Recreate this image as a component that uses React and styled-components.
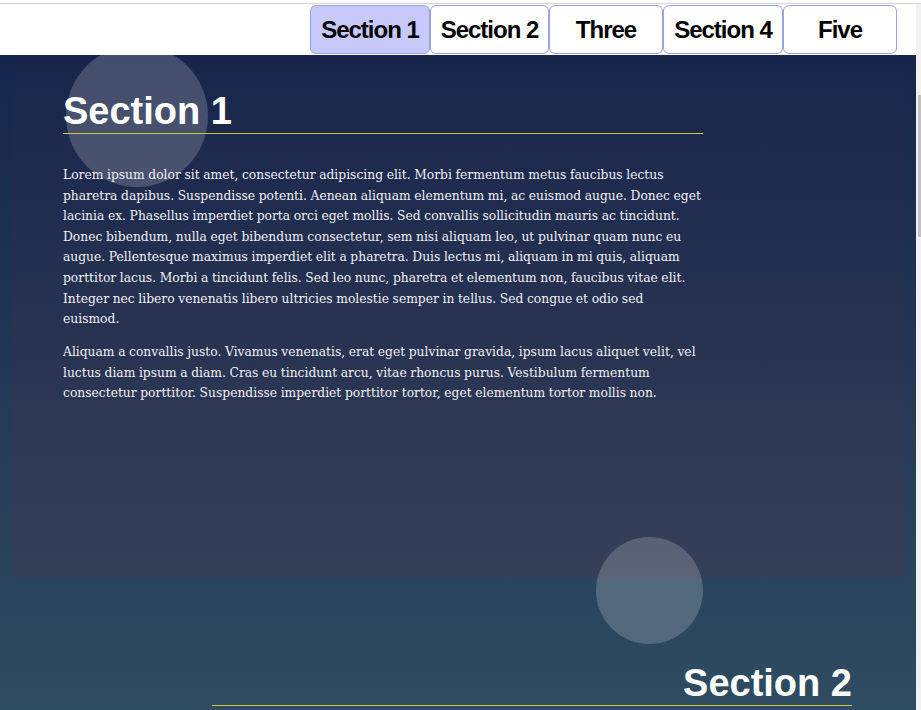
import React, { useLayoutEffect, useRef, useState } from 'react';
import styled, { createGlobalStyle } from 'styled-components';

const GlobalStyle = createGlobalStyle`
  html, body {
    margin: 0;
    height: 100%;
    overflow: hidden;
    background: #fff;
  }
  #root {
    height: 100%;
  }
`;

const Frame = styled.div`
  height: 100vh;
  display: flex;
  flex-direction: column;
  background: #fff;
`;

const TopRule = styled.div`
  flex: none;
  height: 3px;
  border-bottom: 1px solid #d3d3d3;
`;

const Viewport = styled.div`
  flex: 1;
  min-height: 0;
  display: flex;
`;

const Scroller = styled.div`
  flex: 1;
  overflow-y: scroll;
  scrollbar-width: none;
  background: linear-gradient(#14224a, #2e4c61);

  &::-webkit-scrollbar {
    display: none;
  }
`;

const Rail = styled.div`
  position: relative;
  flex: none;
  width: 5px;
  background: #f1f1f1;
`;

const Thumb = styled.div`
  position: absolute;
  left: 2px;
  right: 0;
  background: #c1c1c1;
`;

const Header = styled.header`
  position: sticky;
  top: 0;
  z-index: 10;
  height: 51px;
  box-sizing: border-box;
  padding: 1px 19px 0 0;
  display: flex;
  justify-content: flex-end;
  align-items: flex-start;
  background: #fff;
`;

const NavButton = styled.button`
  width: ${({ $w }) => $w}px;
  height: 49px;
  box-sizing: border-box;
  padding: 0;
  border: 1px solid #9aa3e4;
  border-radius: 6px;
  background: ${({ $active }) => ($active ? '#c7c9fb' : '#fff')};
  color: #000;
  font: bold 24px 'Liberation Sans', Arial, sans-serif;
  letter-spacing: -1px;
  cursor: pointer;
`;

const Hero = styled.div`
  height: 403px;
`;

const Section = styled.section`
  position: relative;
  height: 572px;
  box-sizing: border-box;
  margin: 0 12px;
  padding: 83px 52px 0 51px;
  display: flex;
  justify-content: ${({ $right }) => ($right ? 'flex-end' : 'flex-start')};
  background: ${({ $active }) =>
    $active ? 'linear-gradient(#15234a, #363f58)' : 'transparent'};
`;

const Bubble = styled.span`
  position: absolute;
  left: ${({ $x }) => $x}px;
  top: ${({ $y }) => $y}px;
  width: ${({ $d }) => $d}px;
  height: ${({ $d }) => $d}px;
  border-radius: 50%;
  background: rgba(255, 255, 255, 0.19);
  pointer-events: none;
`;

const Content = styled.div`
  position: relative;
  z-index: 1;
  width: 640px;
`;

const Heading = styled.h2`
  margin: 0 0 31px;
  border-bottom: 1px solid #c9c844;
  color: #fff;
  font: bold 38px/44px 'Liberation Sans', Arial, sans-serif;
  text-align: ${({ $right }) => ($right ? 'right' : 'left')};
`;

const Para = styled.p`
  margin: 0 0 12.5px;
  color: #f0f0f4;
  font-family: 'DejaVu Serif', serif;
  font-size: 12.3px;
  line-height: 20.6px;
  word-spacing: -0.3px;
`;

const Footer = styled.div`
  height: 196px;
`;

const lorem1 =
  'Lorem ipsum dolor sit amet, consectetur adipiscing elit. Morbi fermentum metus faucibus lectus pharetra dapibus. Suspendisse potenti. Aenean aliquam elementum mi, ac euismod augue. Donec eget lacinia ex. Phasellus imperdiet porta orci eget mollis. Sed convallis sollicitudin mauris ac tincidunt. Donec bibendum, nulla eget bibendum consectetur, sem nisi aliquam leo, ut pulvinar quam nunc eu augue. Pellentesque maximus imperdiet elit a pharetra. Duis lectus mi, aliquam in mi quis, aliquam porttitor lacus. Morbi a tincidunt felis. Sed leo nunc, pharetra et elementum non, faucibus vitae elit. Integer nec libero venenatis libero ultricies molestie semper in tellus. Sed congue et odio sed euismod.';
const lorem2 =
  'Aliquam a convallis justo. Vivamus venenatis, erat eget pulvinar gravida, ipsum lacus aliquet velit, vel luctus diam ipsum a diam. Cras eu tincidunt arcu, vitae rhoncus purus. Vestibulum fermentum consectetur porttitor. Suspendisse imperdiet porttitor tortor, eget elementum tortor mollis non.';

const navItems = [
  { label: 'Section 1', w: 120 },
  { label: 'Section 2', w: 119 },
  { label: 'Three', w: 114 },
  { label: 'Section 4', w: 120 },
  { label: 'Five', w: 114 },
];

const sections = [
  { title: 'Section 1', bubble: { x: 54, y: 39, d: 142 } },
  { title: 'Section 2', bubble: { x: 584, y: -41, d: 107 } },
  { title: 'Section 3' },
  { title: 'Section 4' },
  { title: 'Section 5' },
];

const App = () => {
  const scrollRef = useRef(null);
  const [thumb, setThumb] = useState({ top: 91, height: 142 });

  const measure = () => {
    const el = scrollRef.current;
    if (!el) return;
    const track = el.clientHeight;
    const height = Math.max(20, (track * track) / el.scrollHeight);
    const top = (el.scrollTop * (track - height)) / (el.scrollHeight - track || 1);
    setThumb({ top, height });
  };

  useLayoutEffect(() => {
    if (scrollRef.current) scrollRef.current.scrollTop = 452;
    measure();
  }, []);

  return (
    <>
      <GlobalStyle />
      <Frame>
        <TopRule />
        <Viewport>
          <Scroller ref={scrollRef} onScroll={measure}>
            <Header>
              {navItems.map((item, index) => (
                <NavButton key={item.label} $w={item.w} $active={index === 0}>
                  {item.label}
                </NavButton>
              ))}
            </Header>
            <Hero />
            {sections.map((s, index) => {
              const right = index % 2 === 1;
              return (
                <Section key={s.title} $right={right} $active={index === 0}>
                  {s.bubble && (
                    <Bubble $x={s.bubble.x} $y={s.bubble.y} $d={s.bubble.d} />
                  )}
                  <Content>
                    <Heading $right={right}>{s.title}</Heading>
                    <Para>{lorem1}</Para>
                    <Para>{lorem2}</Para>
                  </Content>
                </Section>
              );
            })}
            <Footer />
          </Scroller>
          <Rail>
            <Thumb style={{ top: thumb.top, height: thumb.height }} />
          </Rail>
        </Viewport>
      </Frame>
    </>
  );
};

export default App;
